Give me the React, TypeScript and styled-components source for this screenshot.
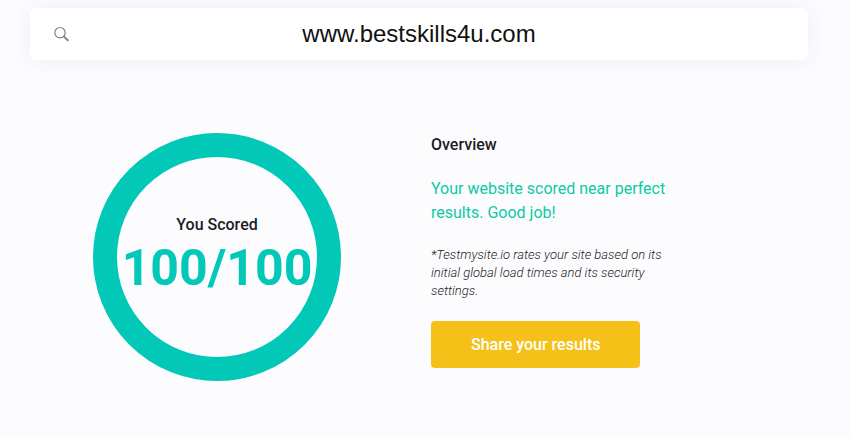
import React from "react";
import styled, { createGlobalStyle } from "styled-components";

const GlobalStyle = createGlobalStyle`
  *, *::before, *::after { box-sizing: border-box; }
  body {
    margin: 0;
    background: #fcfcff;
    color: #1c1c24;
    font-family: Roboto, "Liberation Sans", sans-serif;
    font-size: 16px;
    line-height: 24px;
  }
`;

const Page = styled.main`
  padding: 8px 42px 56px 30px;
`;

const SearchBar = styled.form`
  display: flex;
  align-items: center;
  height: 52px;
  padding: 0 24px;
  background: #fff;
  border-radius: 6px;
  box-shadow: 0 0 20px rgba(60, 70, 130, 0.08);
`;

const SearchIcon = styled.svg`
  flex: none;
  width: 16px;
  height: 16px;
`;

const SearchInput = styled.input`
  flex: 1;
  min-width: 0;
  padding: 0 16px 0 0;
  border: 0;
  outline: 0;
  background: transparent;
  color: #111;
  font: 24px/32px "Liberation Sans", Arial, sans-serif;
  text-align: center;
`;

const Results = styled.section`
  display: grid;
  grid-template-columns: auto minmax(0, 240px);
  justify-content: start;
  align-items: start;
  column-gap: 90px;
  padding: 73px 0 0 63px;
`;

const ScoreRing = styled.div`
  display: flex;
  flex-direction: column;
  align-items: center;
  justify-content: center;
  width: 248px;
  aspect-ratio: 1;
  padding-bottom: 2px;
  border: 24px solid #02c8b7;
  border-radius: 50%;
`;

const ScoreLabel = styled.span`
  font-weight: 500;
`;

const Score = styled.strong`
  color: #02c8b7;
  font-size: 50px;
  line-height: 62px;
  font-weight: 700;
`;

const Overview = styled.div`
  display: flex;
  flex-direction: column;
  align-items: flex-start;
`;

const Heading = styled.h2`
  margin: 0 0 20px;
  font-size: 16px;
  font-weight: 500;
`;

const Verdict = styled.p`
  margin: 0 0 21px;
  color: #0cc9a4;
`;

const Note = styled.p`
  margin: 0 0 21px;
  font-size: 13px;
  line-height: 18px;
  font-style: italic;
  font-weight: 300;
`;

const ShareButton = styled.button`
  height: 47px;
  padding: 0 40px;
  border: 0;
  border-radius: 4px;
  background: #f5c118;
  color: #fff;
  font: 500 16px/24px Roboto, sans-serif;
  cursor: pointer;
`;

export default function App() {
  return (
    <>
      <GlobalStyle />
      <Page>
        <SearchBar role="search" onSubmit={(e) => e.preventDefault()}>
          <SearchIcon viewBox="0 0 16 16" fill="none" stroke="#808080" aria-hidden="true">
            <circle cx="6" cy="6.7" r="5.2" strokeWidth="1.2" />
            <path d="M9.8 10.5l4.6 4.2" strokeWidth="1.9" />
          </SearchIcon>
          <SearchInput aria-label="Website address" defaultValue="www.bestskills4u.com" />
        </SearchBar>
        <Results>
          <ScoreRing>
            <ScoreLabel>You Scored</ScoreLabel>
            <Score>100/100</Score>
          </ScoreRing>
          <Overview>
            <Heading>Overview</Heading>
            <Verdict>Your website scored near perfect results. Good job!</Verdict>
            <Note>
              *Testmysite.io rates your site based on its initial global load times and its security
              settings.
            </Note>
            <ShareButton type="button">Share your results</ShareButton>
          </Overview>
        </Results>
      </Page>
    </>
  );
}
